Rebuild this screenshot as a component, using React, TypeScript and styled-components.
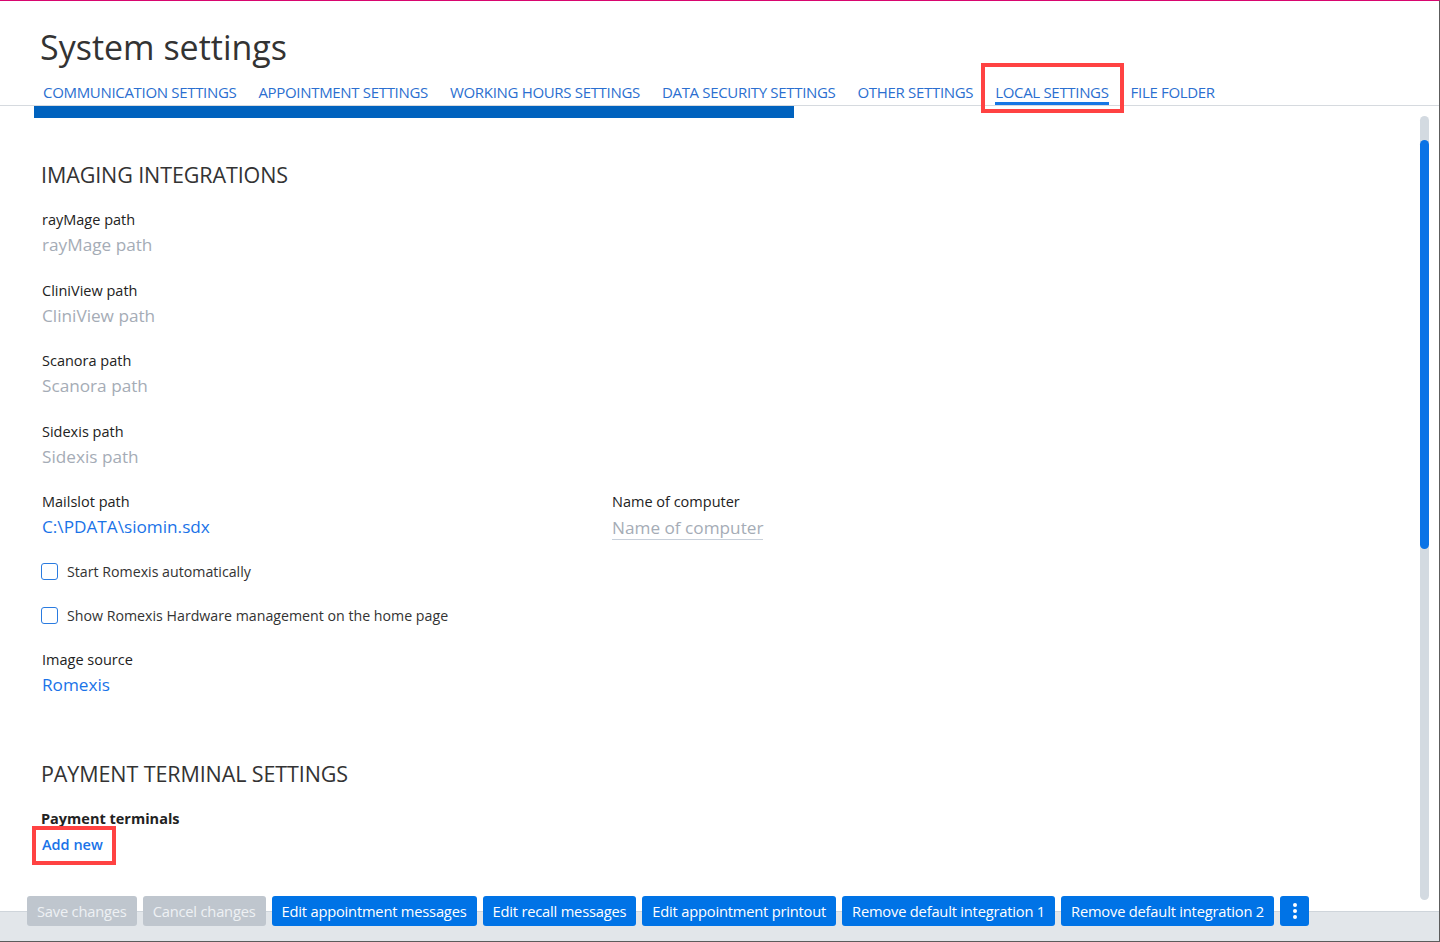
import styled, { createGlobalStyle, css } from "styled-components";

const GlobalStyle = createGlobalStyle`
  html, body {
    margin: 0;
    padding: 0;
    height: 100%;
    overflow: hidden;
  }
  body {
    font-family: "Open Sans", "Noto Sans", sans-serif;
    color: #222;
    background: #fff;
  }
  #root {
    height: 100%;
  }
`;

const Page = styled.div`
  height: 100vh;
  box-sizing: border-box;
  display: flex;
  flex-direction: column;
  border-top: 1px solid #d8066f;
  border-right: 1px solid #5c5c5c;
  border-bottom: 1px solid #5c5c5c;
`;

const Header = styled.header`
  flex: none;
  padding-top: 24px;
`;

const Title = styled.h1`
  margin: 0 0 13px 40px;
  font-size: 34px;
  font-weight: 400;
  line-height: 44px;
  color: #333;
`;

const Tabs = styled.nav`
  display: flex;
  padding-left: 32px;
  border-bottom: 1px solid #d6dadf;
`;

const Tab = styled.a<{ $active?: boolean; $marked?: boolean }>`
  position: relative;
  margin: 0 11px;
  font-size: 15px;
  line-height: 20px;
  color: #2b6fd0;
  letter-spacing: -0.32px;
  white-space: nowrap;
  border-bottom: 3px solid ${(p) => (p.$active ? "#1677e5" : "transparent")};
  cursor: pointer;

  ${(p) =>
    p.$marked &&
    css`
      &::after {
        content: "";
        position: absolute;
        top: -19px;
        bottom: -11px;
        left: -14px;
        right: -15px;
        border: 4px solid #ff4242;
      }
    `}
`;

const Body = styled.div`
  flex: 1;
  min-height: 0;
  display: flex;
  overflow: hidden;
`;

const Main = styled.main`
  flex: 1;
  padding-left: 34px;
`;

const Banner = styled.div`
  width: 760px;
  height: 12px;
  background: #0062be;
`;

const Section = styled.section`
  padding: 0 7px;
`;

const SectionTitle = styled.h2<{ $top: number }>`
  margin: ${(p) => p.$top}px 0 21px;
  font-size: 21.5px;
  font-weight: 400;
  line-height: 28px;
  color: #333;
  letter-spacing: -0.1px;
`;

const FieldRow = styled.div`
  display: grid;
  grid-template-columns: 570px auto;
`;

const Field = styled.div`
  margin-bottom: 20.5px;
  padding-left: 1px;
`;

const Label = styled.div<{ $bold?: boolean }>`
  font-size: 14.5px;
  line-height: 20px;
  color: #222;
  font-weight: ${(p) => (p.$bold ? 700 : 400)};
`;

const Value = styled.div<{ $tone?: "muted" | "link" }>`
  font-size: 17.2px;
  line-height: 30px;
  color: ${(p) => (p.$tone === "link" ? "#1a73e8" : "#a5acb6")};
`;

const InputLine = styled.span`
  display: inline-block;
  margin-top: 5px;
  font-size: 17.2px;
  line-height: 22px;
  color: #a5acb6;
  border-bottom: 1px solid #c8d0da;
`;

const CheckRow = styled.label`
  display: flex;
  align-items: center;
  gap: 9px;
  height: 24px;
  margin: -3px 0 22.5px;
  font-size: 14.2px;
  color: #333;
`;

const Box = styled.span`
  width: 15px;
  height: 15px;
  border: 1.5px solid #2a7be0;
  border-radius: 3px;
  background: #fff;
`;

const AddLink = styled.a`
  position: relative;
  display: inline-block;
  margin: 3px 0 0 1px;
  font-size: 14.5px;
  font-weight: 600;
  line-height: 26px;
  color: #1a73e8;
  cursor: pointer;

  &::after {
    content: "";
    position: absolute;
    top: -6px;
    bottom: -7px;
    left: -10px;
    right: -13px;
    border: 4px solid #ff4242;
  }
`;

const Rail = styled.div`
  flex: none;
  width: 9px;
  margin: 10px 10px 11px 0;
  border-radius: 5px;
  background: #d3dae1;
  padding-top: 24px;
`;

const Thumb = styled.div`
  height: 409px;
  border-radius: 5px;
  background: #0a73e6;
`;

const Footer = styled.footer`
  position: relative;
  z-index: 1;
  flex: none;
  height: 29px;
  background: #e2e6ea;
  border-top: 1px solid #cfd5db;
`;

const ButtonRow = styled.div`
  display: flex;
  gap: 6px;
  margin: -16px 0 0 27px;
`;

const Button = styled.button<{ $disabled?: boolean }>`
  height: 30px;
  padding: 0 10px;
  border: none;
  border-radius: 3px;
  font-family: "Open Sans", "Noto Sans", sans-serif;
  font-size: 14.7px;
  letter-spacing: -0.2px;
  white-space: nowrap;
  color: ${(p) => (p.$disabled ? "#eef1f4" : "#fff")};
  background: ${(p) => (p.$disabled ? "#bfc6ce" : "#0073e6")};
  cursor: ${(p) => (p.$disabled ? "default" : "pointer")};
`;

const IconButton = styled(Button)`
  width: 29px;
  padding: 0;
  display: flex;
  align-items: center;
  justify-content: center;
`;

const tabs = [
  "COMMUNICATION SETTINGS",
  "APPOINTMENT SETTINGS",
  "WORKING HOURS SETTINGS",
  "DATA SECURITY SETTINGS",
  "OTHER SETTINGS",
  "LOCAL SETTINGS",
  "FILE FOLDER",
];

const paths = ["rayMage path", "CliniView path", "Scanora path", "Sidexis path"];

const actions = [
  "Edit appointment messages",
  "Edit recall messages",
  "Edit appointment printout",
  "Remove default integration 1",
  "Remove default integration 2",
];

export default function App() {
  return (
    <>
      <GlobalStyle />
      <Page>
        <Header>
          <Title>System settings</Title>
          <Tabs>
            {tabs.map((t) => (
              <Tab key={t} $active={t === "LOCAL SETTINGS"} $marked={t === "LOCAL SETTINGS"}>
                {t}
              </Tab>
            ))}
          </Tabs>
        </Header>

        <Body>
          <Main>
            <Banner />
            <Section>
              <SectionTitle $top={43}>IMAGING INTEGRATIONS</SectionTitle>
              {paths.map((p) => (
                <Field key={p}>
                  <Label>{p}</Label>
                  <Value>{p}</Value>
                </Field>
              ))}
              <FieldRow>
                <Field>
                  <Label>Mailslot path</Label>
                  <Value $tone="link">C:\PDATA\siomin.sdx</Value>
                </Field>
                <Field>
                  <Label>Name of computer</Label>
                  <InputLine>Name of computer</InputLine>
                </Field>
              </FieldRow>
              <CheckRow>
                <Box />
                Start Romexis automatically
              </CheckRow>
              <CheckRow>
                <Box />
                Show Romexis Hardware management on the home page
              </CheckRow>
              <Field>
                <Label>Image source</Label>
                <Value $tone="link">Romexis</Value>
              </Field>

              <SectionTitle $top={60}>PAYMENT TERMINAL SETTINGS</SectionTitle>
              <Label $bold>Payment terminals</Label>
              <AddLink>Add new</AddLink>
            </Section>
          </Main>
          <Rail>
            <Thumb />
          </Rail>
        </Body>

        <Footer>
          <ButtonRow>
            <Button $disabled>Save changes</Button>
            <Button $disabled>Cancel changes</Button>
            {actions.map((a) => (
              <Button key={a}>{a}</Button>
            ))}
            <IconButton aria-label="More">
              <svg width="6" height="18" viewBox="0 0 6 18">
                <circle cx="3" cy="3" r="2" fill="#fff" />
                <circle cx="3" cy="9" r="2" fill="#fff" />
                <circle cx="3" cy="15" r="2" fill="#fff" />
              </svg>
            </IconButton>
          </ButtonRow>
        </Footer>
      </Page>
    </>
  );
}
